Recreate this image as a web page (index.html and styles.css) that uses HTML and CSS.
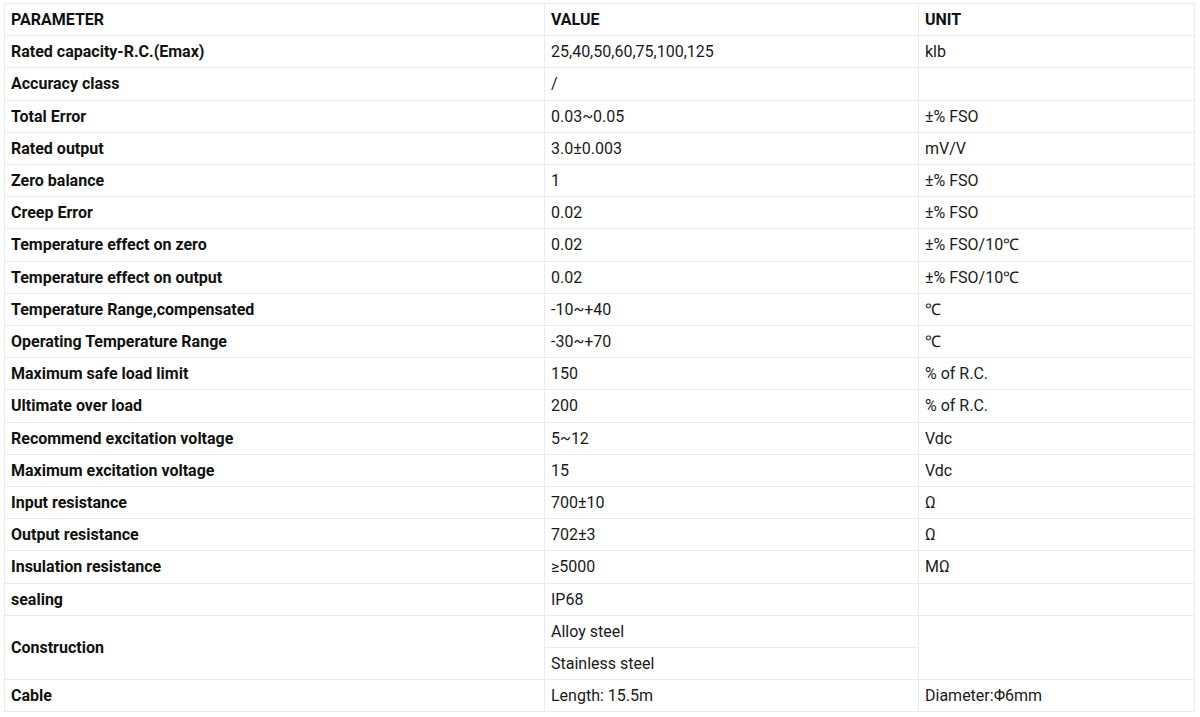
FILE: index.html
```html
<!DOCTYPE html>
<html>
<head>
<meta charset="utf-8">
<link rel="stylesheet" href="styles.css">
</head>
<body>
<table class="spec">
  <colgroup>
    <col class="c1"><col class="c2"><col class="c3">
  </colgroup>
  <tbody>
    <tr class="head"><td class="p">PARAMETER</td><td>VALUE</td><td>UNIT</td></tr>
    <tr><td class="p">Rated capacity-R.C.(Emax)</td><td>25,40,50,60,75,100,125</td><td>klb</td></tr>
    <tr><td class="p">Accuracy class</td><td>/</td><td></td></tr>
    <tr><td class="p">Total Error</td><td>0.03~0.05</td><td>±% FSO</td></tr>
    <tr><td class="p">Rated output</td><td>3.0±0.003</td><td>mV/V</td></tr>
    <tr><td class="p">Zero balance</td><td>1</td><td>±% FSO</td></tr>
    <tr><td class="p">Creep Error</td><td>0.02</td><td>±% FSO</td></tr>
    <tr><td class="p">Temperature effect on zero</td><td>0.02</td><td>±% FSO/10℃</td></tr>
    <tr><td class="p">Temperature effect on output</td><td>0.02</td><td>±% FSO/10℃</td></tr>
    <tr><td class="p">Temperature Range,compensated</td><td>-10~+40</td><td>℃</td></tr>
    <tr><td class="p">Operating Temperature Range</td><td>-30~+70</td><td>℃</td></tr>
    <tr><td class="p">Maximum safe load limit</td><td>150</td><td>% of R.C.</td></tr>
    <tr><td class="p">Ultimate over load</td><td>200</td><td>% of R.C.</td></tr>
    <tr><td class="p">Recommend excitation voltage</td><td>5~12</td><td>Vdc</td></tr>
    <tr><td class="p">Maximum excitation voltage</td><td>15</td><td>Vdc</td></tr>
    <tr><td class="p">Input resistance</td><td>700±10</td><td>Ω</td></tr>
    <tr><td class="p">Output resistance</td><td>702±3</td><td>Ω</td></tr>
    <tr><td class="p">Insulation resistance</td><td>≥5000</td><td>MΩ</td></tr>
    <tr><td class="p">sealing</td><td>IP68</td><td></td></tr>
    <tr><td class="p" rowspan="2">Construction</td><td>Alloy steel</td><td rowspan="2"></td></tr>
    <tr><td>Stainless steel</td></tr>
    <tr><td class="p">Cable</td><td>Length: 15.5m</td><td>Diameter:Φ6mm</td></tr>
  </tbody>
</table>
</body>
</html>
```

FILE: styles.css
```css
html, body {
  margin: 0;
  padding: 0;
  background: #fff;
}
body {
  padding: 3px 4px;
  font-family: Roboto, "Liberation Sans", Arial, sans-serif;
  font-size: 16px;
  color: #1a1a1a;
}
.spec {
  border-collapse: collapse;
  width: 1190px;
  table-layout: fixed;
}
.spec .c1 { width: 540px; }
.spec .c2 { width: 374px; }
.spec .c3 { width: 276px; }
.spec td {
  border: 1px solid #ebebeb;
  padding: 5px 6px;
  line-height: 21.2px;
  vertical-align: middle;
  text-align: left;
}
.spec td.p {
  font-weight: 700;
  color: #111;
}
.spec .head td {
  font-weight: 700;
  color: #111;
}
```
